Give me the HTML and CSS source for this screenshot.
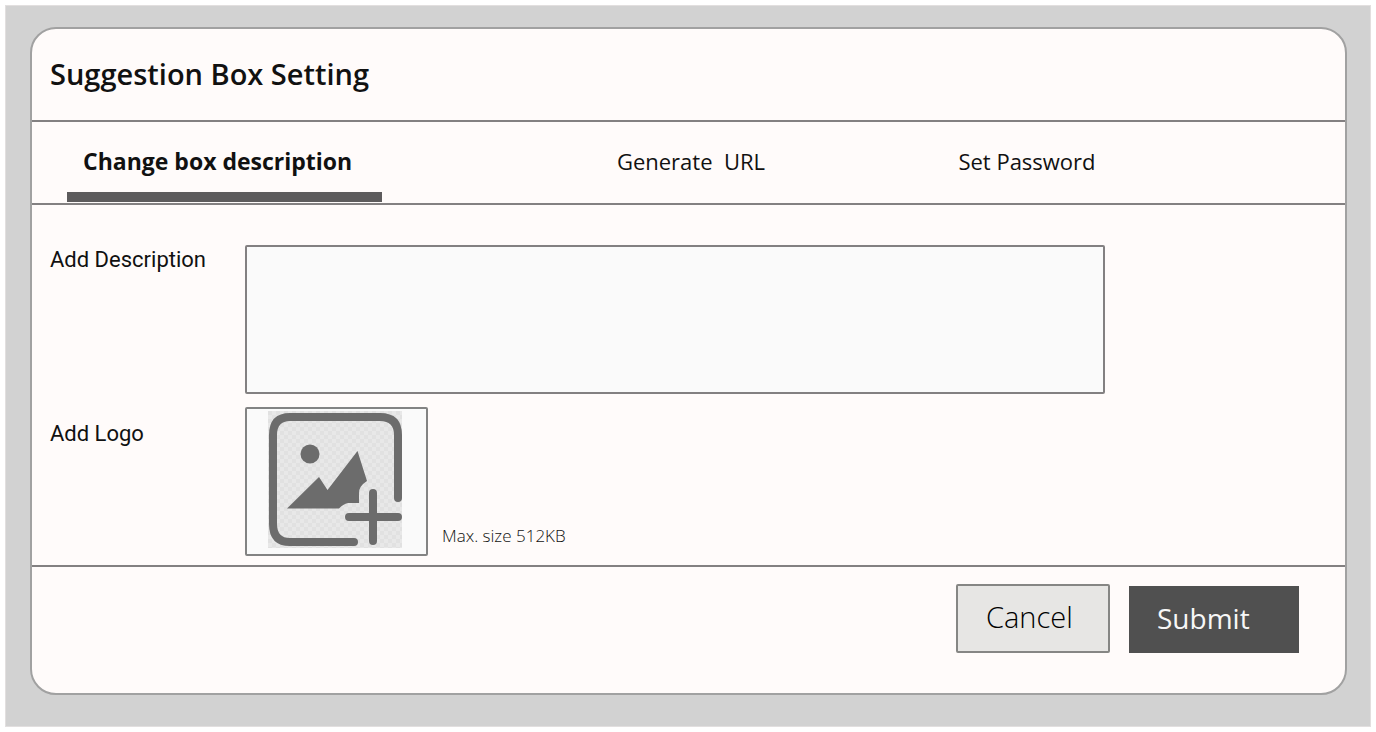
FILE: index.html
```html
<!DOCTYPE html>
<html lang="en">
<head>
<meta charset="utf-8">
<title>Suggestion Box Setting</title>
<link rel="stylesheet" href="styles.css">
</head>
<body>
<main class="backdrop">
  <form class="card">
    <header class="card-header">
      <h1 class="title">Suggestion Box Setting</h1>
    </header>
    <nav class="tabs">
      <button type="button" class="tab tab-active">Change box description</button>
      <button type="button" class="tab tab-url">Generate&nbsp; URL</button>
      <button type="button" class="tab tab-password">Set Password</button>
    </nav>
    <section class="fields">
      <label class="field-label" for="description">Add Description</label>
      <textarea class="description" id="description"></textarea>
      <label class="field-label" for="logo">Add Logo</label>
      <div class="logo-row">
        <button type="button" class="logo-picker" id="logo">
          <svg class="logo-icon" viewBox="0 0 134 137" aria-hidden="true">
            <defs>
              <pattern id="checks" width="8" height="8" patternUnits="userSpaceOnUse">
                <rect width="8" height="8" fill="#e8e8e8"/>
                <path d="M0 0h4v4h-4zM4 4h4v4h-4z" fill="#e1e1e1"/>
              </pattern>
            </defs>
            <rect width="134" height="137" fill="url(#checks)"/>
            <path d="M86 131H22Q5 131 5 113V24Q5 6 22 6H112Q130 6 130 24V87" fill="none" stroke="#6c6c6c" stroke-width="8" stroke-linecap="round"/>
            <circle cx="42" cy="43" r="9.5" fill="#6c6c6c"/>
            <path d="M19 97.500L51 66L59.500 79L89.500 40L99 70Q91 75 91 82V92H80Q75 93 71 97.500Z" fill="#6c6c6c"/>
            <path d="M105 82V130M81 106H130" fill="none" stroke="#6c6c6c" stroke-width="8" stroke-linecap="round"/>
          </svg>
        </button>
        <span class="hint">Max. size 512KB</span>
      </div>
    </section>
    <footer class="actions">
      <button type="button" class="btn btn-cancel">Cancel</button>
      <button type="submit" class="btn btn-submit">Submit</button>
    </footer>
  </form>
</main>
</body>
</html>
```
FILE: styles.css
```css
* {
  box-sizing: border-box;
}

body {
  margin: 0;
  padding: 5px;
  background: #fff;
  color: #111;
  font-family: "Open Sans", "Noto Sans", sans-serif;
}

button {
  padding: 0;
  border: 0;
  background: none;
  color: inherit;
  font-family: inherit;
}

.backdrop {
  padding: 21px 23px 31px 24px;
  border: 1px solid #e2dfdf;
  background: #d2d2d2;
}

.card {
  display: flex;
  flex-direction: column;
  border: 2px solid #a1a1a1;
  border-radius: 26px;
  background: #fffbfa;
}

.card-header {
  padding: 23px 18px 24px;
  border-bottom: 2px solid #838081;
}

.title {
  margin: 0;
  font-size: 29px;
  font-weight: 600;
  line-height: 44px;
}

.tabs {
  display: grid;
  grid-template-columns: 315fr 141fr 336fr 336fr 150fr;
  padding: 0 0 1px 35px;
  border-bottom: 2px solid #838081;
}

.tab {
  padding: 24px 0 16px;
  border-bottom: 10px solid transparent;
  font-size: 22px;
  line-height: 30px;
  white-space: nowrap;
}

.tab-active {
  padding-left: 16px;
  border-color: #5d5b5c;
  font-size: 23px;
  font-weight: 700;
  text-align: left;
}

.tab-url {
  grid-column: 3;
}

.fields {
  display: grid;
  grid-template-columns: 195px 1fr;
  row-gap: 13px;
  padding: 40px 240px 9px 18px;
  border-bottom: 2px solid #838081;
}

.field-label {
  font-family: Roboto, sans-serif;
  font-size: 22px;
  line-height: 30px;
}

.field-label[for="logo"] {
  padding-top: 12px;
}

.description {
  display: block;
  width: 100%;
  height: 149px;
  padding: 8px;
  border: 2px solid #838081;
  border-radius: 2px;
  background: #fafafa;
  resize: none;
  font-family: inherit;
  font-size: 22px;
}

.logo-row {
  display: flex;
  align-items: flex-end;
  gap: 14px;
}

.logo-picker {
  display: flex;
  align-items: flex-start;
  width: 183px;
  height: 149px;
  padding: 2px 21px;
  border: 2px solid #838383;
  border-radius: 2px;
  background: #fafafa;
}

.logo-icon {
  display: block;
  width: 134px;
  height: 137px;
}

.hint {
  padding-bottom: 8px;
  font-size: 17px;
  font-weight: 350;
  line-height: 24px;
}

.actions {
  display: flex;
  align-items: flex-end;
  justify-content: flex-end;
  gap: 19px;
  padding: 17px 46px 40px;
}

.btn {
  padding: 0 28px 4px;
  font-size: 28px;
  line-height: 40px;
  text-align: left;
}

.btn-cancel {
  width: 154px;
  height: 69px;
  border: 2px solid #868684;
  border-radius: 2px;
  background: #e7e6e4;
  color: #000;
  font-size: 29px;
  font-weight: 350;
}

.btn-submit {
  width: 170px;
  height: 67px;
  background: #505050;
  color: #f7f7f7;
}
```
